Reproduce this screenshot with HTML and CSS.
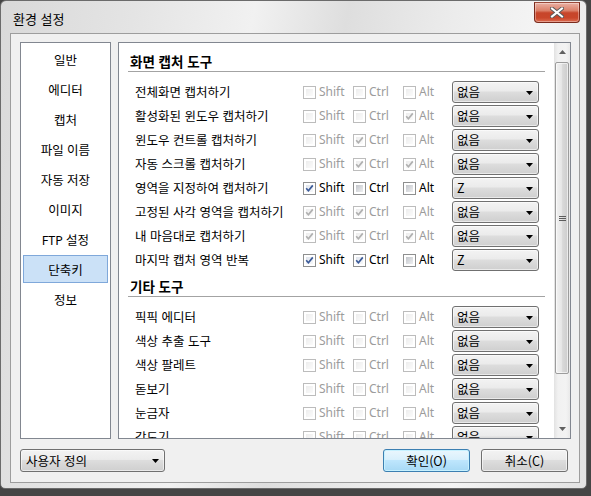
FILE: index.html
```html
<!DOCTYPE html>
<html lang="ko">
<head>
<meta charset="utf-8">
<title>환경 설정</title>
<link rel="stylesheet" href="styles.css">
</head>
<body>
<div class="window">
  <div class="titlebar">
    <span class="title">환경 설정</span>
    <div class="close">
      <svg width="14" height="11" viewBox="0 0 14 11"><path d="M2 1.5 L12 9.5 M12 1.5 L2 9.5" class="x-out"/><path d="M2 1.5 L12 9.5 M12 1.5 L2 9.5" class="x-in"/></svg>
    </div>
  </div>
  <div class="client">
    <div class="main">
      <ul class="nav">
        <li>일반</li>
        <li>에디터</li>
        <li>캡처</li>
        <li>파일 이름</li>
        <li>자동 저장</li>
        <li>이미지</li>
        <li>FTP 설정</li>
        <li class="active">단축키</li>
        <li>정보</li>
      </ul>
      <div class="panel">
        <div class="content">
          <section class="group first">
            <h2>화면 캡처 도구</h2>
            <div class="rows">
              <div class="row off"><span class="label">전체화면 캡처하기</span>
                <span class="chk"><i class="box"></i>Shift</span><span class="chk"><i class="box"></i>Ctrl</span><span class="chk"><i class="box"></i>Alt</span>
                <span class="combo"><span>없음</span><svg class="arrow" width="7" height="4" viewBox="0 0 7 4"><path d="M0 0H7L3.5 4Z"/></svg></span></div>
              <div class="row off"><span class="label">활성화된 윈도우 캡처하기</span>
                <span class="chk"><i class="box"></i>Shift</span><span class="chk"><i class="box"></i>Ctrl</span><span class="chk"><i class="box"><svg viewBox="0 0 11 11"><path d="M2.2 5.3 4.4 7.8 8.8 2.4"/></svg></i>Alt</span>
                <span class="combo"><span>없음</span><svg class="arrow" width="7" height="4" viewBox="0 0 7 4"><path d="M0 0H7L3.5 4Z"/></svg></span></div>
              <div class="row off"><span class="label">윈도우 컨트롤 캡처하기</span>
                <span class="chk"><i class="box"></i>Shift</span><span class="chk"><i class="box"><svg viewBox="0 0 11 11"><path d="M2.2 5.3 4.4 7.8 8.8 2.4"/></svg></i>Ctrl</span><span class="chk"><i class="box"></i>Alt</span>
                <span class="combo"><span>없음</span><svg class="arrow" width="7" height="4" viewBox="0 0 7 4"><path d="M0 0H7L3.5 4Z"/></svg></span></div>
              <div class="row off"><span class="label">자동 스크롤 캡처하기</span>
                <span class="chk"><i class="box"></i>Shift</span><span class="chk"><i class="box"><svg viewBox="0 0 11 11"><path d="M2.2 5.3 4.4 7.8 8.8 2.4"/></svg></i>Ctrl</span><span class="chk"><i class="box"><svg viewBox="0 0 11 11"><path d="M2.2 5.3 4.4 7.8 8.8 2.4"/></svg></i>Alt</span>
                <span class="combo"><span>없음</span><svg class="arrow" width="7" height="4" viewBox="0 0 7 4"><path d="M0 0H7L3.5 4Z"/></svg></span></div>
              <div class="row"><span class="label">영역을 지정하여 캡처하기</span>
                <span class="chk"><i class="box"><svg viewBox="0 0 11 11"><path d="M2.2 5.3 4.4 7.8 8.8 2.4"/></svg></i>Shift</span><span class="chk"><i class="box"></i>Ctrl</span><span class="chk"><i class="box"></i>Alt</span>
                <span class="combo"><span>Z</span><svg class="arrow" width="7" height="4" viewBox="0 0 7 4"><path d="M0 0H7L3.5 4Z"/></svg></span></div>
              <div class="row off"><span class="label">고정된 사각 영역을 캡처하기</span>
                <span class="chk"><i class="box"><svg viewBox="0 0 11 11"><path d="M2.2 5.3 4.4 7.8 8.8 2.4"/></svg></i>Shift</span><span class="chk"><i class="box"><svg viewBox="0 0 11 11"><path d="M2.2 5.3 4.4 7.8 8.8 2.4"/></svg></i>Ctrl</span><span class="chk"><i class="box"></i>Alt</span>
                <span class="combo"><span>없음</span><svg class="arrow" width="7" height="4" viewBox="0 0 7 4"><path d="M0 0H7L3.5 4Z"/></svg></span></div>
              <div class="row off"><span class="label">내 마음대로 캡처하기</span>
                <span class="chk"><i class="box"><svg viewBox="0 0 11 11"><path d="M2.2 5.3 4.4 7.8 8.8 2.4"/></svg></i>Shift</span><span class="chk"><i class="box"><svg viewBox="0 0 11 11"><path d="M2.2 5.3 4.4 7.8 8.8 2.4"/></svg></i>Ctrl</span><span class="chk"><i class="box"><svg viewBox="0 0 11 11"><path d="M2.2 5.3 4.4 7.8 8.8 2.4"/></svg></i>Alt</span>
                <span class="combo"><span>없음</span><svg class="arrow" width="7" height="4" viewBox="0 0 7 4"><path d="M0 0H7L3.5 4Z"/></svg></span></div>
              <div class="row"><span class="label">마지막 캡처 영역 반복</span>
                <span class="chk"><i class="box"><svg viewBox="0 0 11 11"><path d="M2.2 5.3 4.4 7.8 8.8 2.4"/></svg></i>Shift</span><span class="chk"><i class="box"><svg viewBox="0 0 11 11"><path d="M2.2 5.3 4.4 7.8 8.8 2.4"/></svg></i>Ctrl</span><span class="chk"><i class="box"></i>Alt</span>
                <span class="combo"><span>Z</span><svg class="arrow" width="7" height="4" viewBox="0 0 7 4"><path d="M0 0H7L3.5 4Z"/></svg></span></div>
            </div>
          </section>
          <section class="group">
            <h2>기타 도구</h2>
            <div class="rows">
              <div class="row off"><span class="label">픽픽 에디터</span>
                <span class="chk"><i class="box"></i>Shift</span><span class="chk"><i class="box"></i>Ctrl</span><span class="chk"><i class="box"></i>Alt</span>
                <span class="combo"><span>없음</span><svg class="arrow" width="7" height="4" viewBox="0 0 7 4"><path d="M0 0H7L3.5 4Z"/></svg></span></div>
              <div class="row off"><span class="label">색상 추출 도구</span>
                <span class="chk"><i class="box"></i>Shift</span><span class="chk"><i class="box"></i>Ctrl</span><span class="chk"><i class="box"></i>Alt</span>
                <span class="combo"><span>없음</span><svg class="arrow" width="7" height="4" viewBox="0 0 7 4"><path d="M0 0H7L3.5 4Z"/></svg></span></div>
              <div class="row off"><span class="label">색상 팔레트</span>
                <span class="chk"><i class="box"></i>Shift</span><span class="chk"><i class="box"></i>Ctrl</span><span class="chk"><i class="box"></i>Alt</span>
                <span class="combo"><span>없음</span><svg class="arrow" width="7" height="4" viewBox="0 0 7 4"><path d="M0 0H7L3.5 4Z"/></svg></span></div>
              <div class="row off"><span class="label">돋보기</span>
                <span class="chk"><i class="box"></i>Shift</span><span class="chk"><i class="box"></i>Ctrl</span><span class="chk"><i class="box"></i>Alt</span>
                <span class="combo"><span>없음</span><svg class="arrow" width="7" height="4" viewBox="0 0 7 4"><path d="M0 0H7L3.5 4Z"/></svg></span></div>
              <div class="row off"><span class="label">눈금자</span>
                <span class="chk"><i class="box"></i>Shift</span><span class="chk"><i class="box"></i>Ctrl</span><span class="chk"><i class="box"></i>Alt</span>
                <span class="combo"><span>없음</span><svg class="arrow" width="7" height="4" viewBox="0 0 7 4"><path d="M0 0H7L3.5 4Z"/></svg></span></div>
              <div class="row off"><span class="label">각도기</span>
                <span class="chk"><i class="box"></i>Shift</span><span class="chk"><i class="box"></i>Ctrl</span><span class="chk"><i class="box"></i>Alt</span>
                <span class="combo"><span>없음</span><svg class="arrow" width="7" height="4" viewBox="0 0 7 4"><path d="M0 0H7L3.5 4Z"/></svg></span></div>
              <div class="row off"><span class="label">십자선</span>
                <span class="chk"><i class="box"></i>Shift</span><span class="chk"><i class="box"></i>Ctrl</span><span class="chk"><i class="box"></i>Alt</span>
                <span class="combo"><span>없음</span><svg class="arrow" width="7" height="4" viewBox="0 0 7 4"><path d="M0 0H7L3.5 4Z"/></svg></span></div>
            </div>
          </section>
        </div>
        <div class="scrollbar">
          <div class="sb-btn"><svg width="7" height="4" viewBox="0 0 7 4"><path d="M0 4H7L3.5 0Z"/></svg></div>
          <div class="thumb"><span class="grip"></span></div>
          <div class="sb-btn down"><svg width="7" height="4" viewBox="0 0 7 4"><path d="M0 0H7L3.5 4Z"/></svg></div>
        </div>
      </div>
    </div>
    <div class="footer">
      <span class="combo profile"><span>사용자 정의</span><svg class="arrow" width="7" height="4" viewBox="0 0 7 4"><path d="M0 0H7L3.5 4Z"/></svg></span>
      <button class="btn default">확인(O)</button>
      <button class="btn">취소(C)</button>
    </div>
  </div>
</div>
</body>
</html>
```

FILE: styles.css
```css
html, body {
  margin: 0;
  padding: 0;
}
body {
  width: 591px;
  height: 496px;
  overflow: hidden;
  background: #454545;
  font-family: "Noto Sans", "Noto Sans CJK KR", sans-serif;
  font-size: 12px;
  color: #000;
}

.window {
  box-sizing: border-box;
  width: 587px;
  height: 489px;
  border: 1px solid #6b6b6b;
  border-radius: 6px 6px 5px 5px;
  background:
    linear-gradient(100deg, #d9d9d9 0%, #e4e4e4 20%, #f1f1f1 38%, #dedede 52%, #ececec 68%, #f4f4f4 80%, #e2e2e2 100%);
  display: flex;
  flex-direction: column;
}

.titlebar {
  flex: none;
  height: 32px;
  display: flex;
  justify-content: space-between;
  align-items: flex-start;
}
.title {
  padding: 10px 0 0 12px;
  line-height: 16px;
  font-family: "Noto Sans CJK KR", sans-serif;
  font-size: 13px;
}
.close {
  box-sizing: border-box;
  margin: 1px 6px 0 0;
  width: 46px;
  height: 21px;
  border: 1px solid #7a2a1c;
  border-top-color: #9a4a3a;
  border-radius: 0 0 4px 4px;
  background: linear-gradient(#eab0a3 0%, #db8069 40%, #c7452a 52%, #c9462a 78%, #dd6d52 100%);
  box-shadow: inset 0 0 0 1px rgba(255, 255, 255, 0.35);
  display: flex;
  align-items: center;
  justify-content: center;
}
.close svg { display: block; }
.x-out { stroke: #5b5b5b; stroke-width: 4; stroke-linecap: square; fill: none; }
.x-in { stroke: #fff; stroke-width: 2; stroke-linecap: square; fill: none; }

.client {
  flex: 1;
  margin: 0 6px 5px 9px;
  border: 1px solid #9d9d9d;
  background: #f0f0f0;
  padding: 8px 8px 10px 9px;
  display: flex;
  flex-direction: column;
  gap: 10px;
}

.main {
  display: flex;
  gap: 7px;
  height: 397px;
}

.nav {
  box-sizing: border-box;
  width: 91px;
  margin: 0;
  padding: 1px 0 0;
  list-style: none;
  border: 1px solid #828790;
  background: #fff;
  font-family: "Noto Sans", "Noto Sans CJK KR", sans-serif;
  font-size: 12.5px;
}
.nav li {
  height: 30px;
  display: flex;
  align-items: center;
  justify-content: center;
  white-space: nowrap;
}
.nav li.active {
  box-sizing: border-box;
  height: 28px;
  margin: 1px 2px;
  border: 1px solid #7fa8da;
  background: #cbe1f7;
}

.panel {
  flex: 1;
  display: flex;
  border: 1px solid #828790;
  background: #fff;
  overflow: hidden;
}
.content {
  flex: 1;
  overflow: hidden;
}

.group.first { padding-top: 9px; }
.group + .group { margin-top: 6px; }
.group h2 {
  margin: 0 9px;
  padding: 0 0 1px 2px;
  font-family: "Noto Sans CJK KR", sans-serif;
  font-size: 13.5px;
  font-weight: 700;
  line-height: 18px;
  border-bottom: 1px solid #a3a3a3;
}
.rows {
  margin-top: 9px;
  padding-left: 16px;
  display: flex;
  flex-direction: column;
  gap: 2px;
}
.row {
  display: grid;
  grid-template-columns: 168px 50px 50px 49px 87px;
  align-items: center;
  height: 22px;
}
.label {
  font-family: "Noto Sans CJK KR", sans-serif;
  font-size: 12.5px;
  white-space: nowrap;
  line-height: 16px;
}
.chk {
  display: flex;
  align-items: center;
  gap: 3px;
  line-height: 16px;
  white-space: nowrap;
}
.box {
  box-sizing: border-box;
  width: 13px;
  height: 13px;
  flex: none;
  border: 1px solid #8e8f8f;
  background: #fff;
  position: relative;
}
.box::before {
  content: "";
  position: absolute;
  left: 2px;
  top: 2px;
  width: 7px;
  height: 7px;
  background: linear-gradient(135deg, #c3c6cb, #eeeff1);
  border: 0;
}
.box svg {
  position: absolute;
  left: 0;
  top: 0;
  width: 11px;
  height: 11px;
  z-index: 1;
}
.box svg path {
  fill: none;
  stroke: #3a5a98;
  stroke-width: 1.7;
}
.row .box:has(svg)::before {
  background: linear-gradient(135deg, #dfe4ec, #f7f8fa);
}

.row.off .chk { color: #9c9c9c; }
.row.off .box { border-color: #bcbcbc; }
.row.off .box::before,
.row.off .box:has(svg)::before { background: linear-gradient(135deg, #ededed, #fbfbfb); }
.row.off .box svg path { stroke: #b0b0b0; }

.combo {
  box-sizing: border-box;
  width: 87px;
  height: 22px;
  border: 1px solid #707070;
  border-radius: 3px;
  background: linear-gradient(#f3f3f3 0%, #ebebeb 45%, #dddddd 50%, #cfcfcf 100%);
  box-shadow: inset 0 0 0 1px rgba(255, 255, 255, 0.55);
  display: flex;
  align-items: center;
  justify-content: space-between;
  padding: 0 5px 0 4px;
  font-family: "Noto Sans CJK KR", sans-serif;
  font-size: 12.5px;
  line-height: 16px;
  white-space: nowrap;
}
.arrow { display: block; flex: none; margin-top: 1px; }
.arrow path { fill: #000; }

.scrollbar {
  flex: none;
  width: 16px;
  display: flex;
  flex-direction: column;
  background: linear-gradient(to right, #e2e2e2 0%, #f1f1f1 25%, #f3f3f3 75%, #e9e9e9 100%);
}
.sb-btn {
  height: 18px;
  display: flex;
  align-items: center;
  justify-content: center;
}
.sb-btn path { fill: #606060; }
.sb-btn.down { margin-top: auto; height: 18px; }
.thumb {
  box-sizing: border-box;
  margin: 1px 1px 0 1px;
  height: 312px;
  border: 1px solid #9c9c9c;
  border-radius: 2px;
  background: linear-gradient(to right, #f1f1f1 0%, #e7e7e7 45%, #d9d9d9 55%, #cdcdcd 100%);
  box-shadow: inset 0 0 0 1px rgba(255, 255, 255, 0.6);
  display: flex;
  align-items: center;
  justify-content: center;
}
.grip {
  width: 7px;
  height: 5px;
  background: repeating-linear-gradient(#5c5c5c 0 1px, transparent 1px 2px);
}

.footer {
  display: flex;
  align-items: center;
  height: 23px;
}
.combo.profile {
  width: 145px;
  height: 23px;
  padding: 0 5px 0 5px;
}
.btn {
  box-sizing: border-box;
  width: 87px;
  height: 23px;
  margin: 0;
  padding: 0;
  border: 1px solid #707070;
  border-radius: 3px;
  background: linear-gradient(#f3f3f3 0%, #ebebeb 45%, #dddddd 50%, #cfcfcf 100%);
  box-shadow: inset 0 0 0 1px rgba(255, 255, 255, 0.6);
  font-family: "Noto Sans CJK KR", sans-serif;
  font-size: 12.5px;
  line-height: 16px;
  color: #000;
}
.btn.default {
  margin-left: auto;
  margin-right: 11px;
  border-color: #3c7fb1;
  background: linear-gradient(#eaf6fd 0%, #d9f0fc 45%, #bee6fd 50%, #a7d9f5 100%);
  box-shadow: inset 0 0 0 1px #c6f1ff;
}
.btn:last-child { margin-right: 3px; }
```
